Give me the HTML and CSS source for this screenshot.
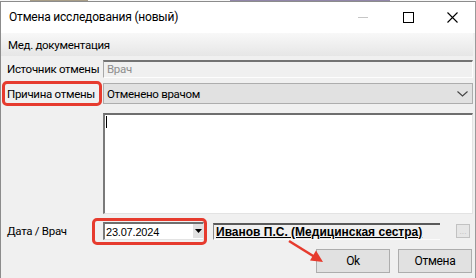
FILE: index.html
```html
<!DOCTYPE html>
<html lang="ru">
<head>
<meta charset="utf-8">
<title>Отмена исследования</title>
<link rel="stylesheet" href="styles.css">
</head>
<body>
<div class="backdrop"></div>
<div class="window">
  <div class="titlebar">
    <div class="title">Отмена исследования (новый)</div>
    <div class="controls">
      <div class="ctl ctl-min"><span class="min-line"></span></div>
      <div class="ctl"><span class="max-box"></span></div>
      <div class="ctl">
        <svg width="11" height="11" viewBox="0 0 11 11"><path d="M0.5 0.5 L10.5 10.5 M10.5 0.5 L0.5 10.5" stroke="#000" stroke-width="1.1" fill="none"/></svg>
      </div>
    </div>
  </div>
  <div class="section">Мед. документация</div>
  <div class="form">
    <div class="row row-source">
      <div class="label">Источник отмены</div>
      <div class="field readonly">Врач</div>
    </div>
    <div class="row row-reason">
      <div class="label">Причина отмены</div>
      <div class="field combo">
        <span>Отменено врачом</span>
        <svg class="chev" width="11" height="6" viewBox="0 0 11 6"><path d="M0.5 0.5 L5.5 5 L10.5 0.5" stroke="#444" stroke-width="1.1" fill="none"/></svg>
      </div>
    </div>
    <div class="row row-memo">
      <div class="label"></div>
      <div class="field memo"><span class="caret"></span></div>
    </div>
    <div class="row row-date">
      <div class="label">Дата / Врач</div>
      <div class="date">
        <span class="date-text">23.07.2024</span>
        <span class="date-btn"><svg width="7" height="4" viewBox="0 0 7 4"><path d="M0 0 H7 L3.5 4 Z" fill="#000"/></svg></span>
      </div>
      <div class="doctor"><span>Иванов П.С. (Медицинская сестра)</span></div>
      <div class="ellipsis">...</div>
    </div>
    <div class="buttons">
      <div class="btn">Ok</div>
      <div class="btn">Отмена</div>
    </div>
  </div>
</div>
<div class="annot annot-reason"></div>
<div class="annot annot-date"></div>
<svg class="arrow" width="476" height="278" viewBox="0 0 476 278">
  <line x1="289" y1="241" x2="314" y2="256.5" stroke="#e63b2e" stroke-width="2.6"/>
  <polygon points="323,262 310,260.5 316,250.5" fill="#e63b2e"/>
</svg>
</body>
</html>
```
FILE: styles.css
```css
html, body {
  margin: 0;
  padding: 0;
}
body {
  width: 476px;
  height: 278px;
  overflow: hidden;
  position: relative;
  background: #f0f0f0;
  font-family: Roboto, "Liberation Sans", Arial, sans-serif;
  font-size: 11.5px;
  letter-spacing: -0.3px;
  color: #000;
}
.backdrop {
  height: 1px;
  background:
    linear-gradient(90deg, transparent 30px, #8a7a5a 30px, #8a7a5a 88px, transparent 88px,
      transparent 230px, #6a5a8a 230px, #6a5a8a 390px, transparent 390px),
    #fafafa;
  opacity: 0.7;
}
.window {
  height: 277px;
  box-sizing: border-box;
  border-top: 1px solid #8c8c8c;
  border-left: 1px solid #8c8c8c;
  border-right: 1px solid #9a9a9a;
  background: #f0f0f0;
  display: flex;
  flex-direction: column;
}
.titlebar {
  height: 31px;
  background: #fff;
  display: flex;
  align-items: center;
  justify-content: space-between;
}
.title {
  padding-left: 8px;
  font-size: 12px;
  letter-spacing: -0.2px;
  padding-bottom: 1px;
}
.controls {
  display: flex;
  height: 100%;
}
.ctl {
  width: 45px;
  display: flex;
  align-items: center;
  justify-content: center;
}
.min-line {
  width: 10px;
  height: 1px;
  background: #c6c6c6;
  margin-left: 1px;
}
.max-box {
  width: 9px;
  height: 9px;
  border: 1px solid #000;
  margin-left: 1px;
}
.section {
  height: 23px;
  margin-right: 2px;
  background: linear-gradient(#f8f8f8, #e6e6e6);
  padding-left: 7px;
  display: flex;
  align-items: center;
}
.form {
  display: flex;
  flex-direction: column;
  padding-right: 2px;
}
.row {
  display: flex;
  align-items: center;
}
.label {
  width: 102px;
  flex: none;
  box-sizing: border-box;
  padding-left: 6px;
  white-space: nowrap;
}
.field {
  flex: 1;
  box-sizing: border-box;
}
.row-source {
  margin-top: 4px;
  height: 18px;
}
.readonly {
  height: 18px;
  border-top: 2px solid #737373;
  border-left: 1px solid #a8a8a8;
  border-right: 1px solid #fdfdfd;
  border-bottom: 1px solid #fdfdfd;
  color: #8e8e8e;
  padding-left: 3px;
  line-height: 15px;
  background: #f0f0f0;
}
.row-reason {
  margin-top: 5px;
  height: 21px;
}
.combo {
  height: 21px;
  background: #e1e1e1;
  border: 1px solid #adadad;
  display: flex;
  align-items: center;
  justify-content: space-between;
  padding-left: 3px;
  padding-right: 4px;
}
.chev {
  margin-top: 1px;
}
.row-memo {
  margin-top: 9px;
  height: 101px;
  align-items: stretch;
}
.memo {
  background: #fff;
  border-top: 2px solid #6e6e6e;
  border-left: 2px solid #7a7a7a;
  border-right: 1px solid #e3e3e3;
  border-bottom: 1px solid #e3e3e3;
  padding: 1px 0 0 1px;
}
.caret {
  display: block;
  width: 1px;
  height: 12px;
  background: #000;
}
.row-date {
  margin-top: 8px;
  height: 18px;
}
.date {
  width: 101px;
  height: 18px;
  box-sizing: border-box;
  background: #fff;
  border-top: 2px solid #6e6e6e;
  border-left: 2px solid #7a7a7a;
  border-right: 1px solid #e3e3e3;
  border-bottom: 1px solid #e3e3e3;
  display: flex;
  align-items: center;
  justify-content: space-between;
  flex: none;
}
.date-text {
  font-family: "Liberation Sans", Arial, sans-serif;
  font-size: 11px;
  padding-left: 1px;
  letter-spacing: -0.2px;
}
.date-btn {
  width: 10px;
  height: 14px;
  background: #e1e1e1;
  display: flex;
  align-items: center;
  justify-content: center;
  margin-top: -1px;
}
.doctor {
  margin-left: 9px;
  width: 227px;
  height: 17px;
  box-sizing: border-box;
  border-top: 2px solid #5a5a5a;
  border-left: 1px solid #8a8a8a;
  border-bottom: 1px solid #fbfbfb;
  flex: none;
  display: flex;
  align-items: center;
  padding-left: 2px;
}
.doctor span {
  font-family: "Liberation Sans", Arial, sans-serif;
  font-weight: bold;
  font-size: 12px;
  letter-spacing: 0;
  text-decoration: underline;
  white-space: nowrap;
}
.ellipsis {
  margin-left: 16px;
  width: 14px;
  height: 14px;
  box-sizing: border-box;
  background: #e6e6e6;
  border: 1px solid #c2c2c2;
  color: #bdbdbd;
  font-size: 9px;
  letter-spacing: 0;
  line-height: 12px;
  text-align: center;
  flex: none;
}
.buttons {
  margin-top: 9px;
  display: flex;
  justify-content: flex-end;
  gap: 8px;
  padding-right: 1px;
}
.btn {
  width: 74px;
  height: 24px;
  box-sizing: border-box;
  background: #e1e1e1;
  border: 1px solid #adadad;
  display: flex;
  align-items: center;
  justify-content: center;
  font-size: 12px;
}
.annot {
  position: absolute;
  border: 3px solid #e63b2e;
  border-radius: 5px;
  box-sizing: border-box;
  pointer-events: none;
}
.annot-reason {
  left: 2px;
  top: 81px;
  width: 100px;
  height: 25px;
}
.annot-date {
  left: 92px;
  top: 218px;
  width: 115px;
  height: 27px;
}
.arrow {
  position: absolute;
  left: 0;
  top: 0;
  pointer-events: none;
}
```
